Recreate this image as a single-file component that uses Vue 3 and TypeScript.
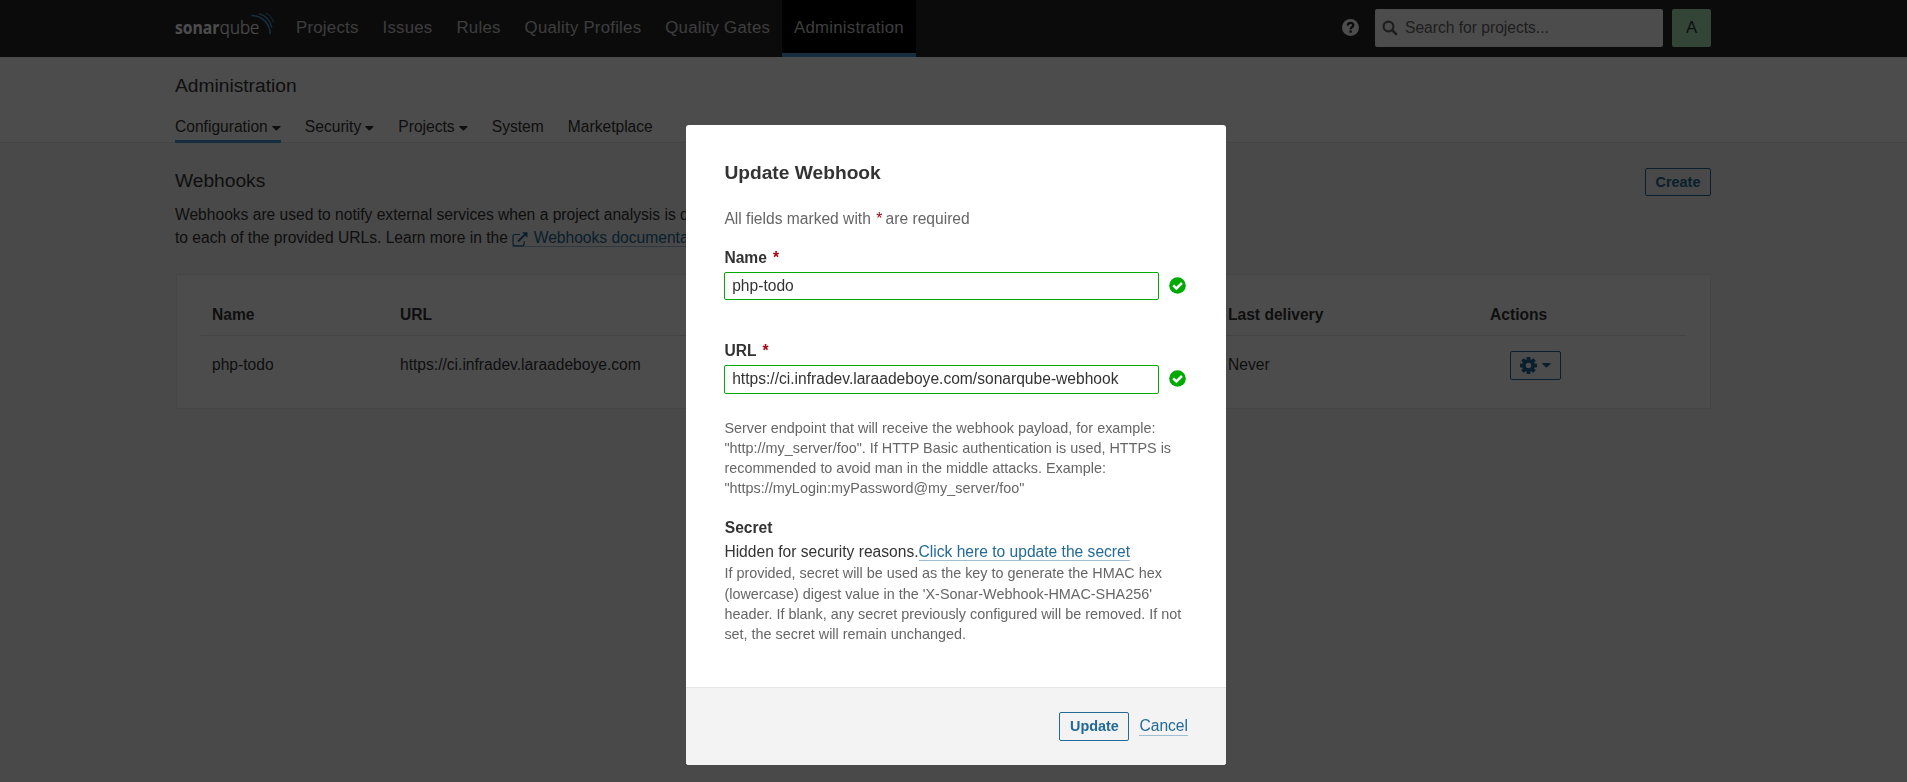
<script setup lang="ts">
interface Tab { label: string; caret?: boolean; active?: boolean }
interface NavLink { label: string; active?: boolean }

const navLinks: NavLink[] = [
  { label: 'Projects' },
  { label: 'Issues' },
  { label: 'Rules' },
  { label: 'Quality Profiles' },
  { label: 'Quality Gates' },
  { label: 'Administration', active: true },
]
const tabs: Tab[] = [
  { label: 'Configuration', caret: true, active: true },
  { label: 'Security', caret: true },
  { label: 'Projects', caret: true },
  { label: 'System' },
  { label: 'Marketplace' },
]
const webhook = { name: 'php-todo', url: 'https://ci.infradev.laraadeboye.com', lastDelivery: 'Never' }
const fields = [
  { label: 'Name', value: 'php-todo' },
  { label: 'URL', value: 'https://ci.infradev.laraadeboye.com/sonarqube-webhook' },
]
</script>

<template>
  <div class="app">
    <header class="navbar">
      <div class="container navbar-inner">
        <svg class="logo" width="100" height="32" viewBox="0 0 100 32">
          <text class="logo-bold" x="0" y="24.2" textLength="44.5" lengthAdjust="spacingAndGlyphs">sonar</text>
          <text class="logo-light" x="44.8" y="24.2" textLength="39.5" lengthAdjust="spacingAndGlyphs">qube</text>
          <g fill="none" stroke="#4b9fd5" stroke-linecap="butt">
            <path stroke-width="1.5" d="M76.500 5.600 C87 5.600 95 13.500 95.300 24" />
            <path stroke-width="1.200" d="M84 3.600 C90.500 5.500 95.500 11 97 17.500" />
            <path stroke-width="1" d="M91 3 C94.500 5 97 8 98.500 12" />
          </g>
        </svg>
        <nav class="nav">
          <a v-for="l in navLinks" :key="l.label" class="nav-link" :class="{ active: l.active }">{{ l.label }}</a>
        </nav>
        <div class="nav-right">
          <svg class="help" width="17" height="17" viewBox="0 0 17 17">
            <circle cx="8.500" cy="8.500" r="8.500" fill="#fff" />
            <path d="M5.700 6.500 C5.900 2.900 11.300 3 11.300 6.300 C11.300 8.300 8.600 8.200 8.600 10.300" fill="none" stroke="#262626" stroke-width="2.300" />
            <rect x="7.400" y="11.400" width="2.400" height="2.300" fill="#262626" />
          </svg>
          <div class="search">
            <svg width="16" height="16" viewBox="0 0 16 16" fill="none" stroke="#666">
              <circle cx="6.500" cy="6.500" r="4.900" stroke-width="2.200" />
              <path d="M10.200 10.200 L14 14" stroke-width="2.600" stroke-linecap="round" />
            </svg>
            <span>Search for projects...</span>
          </div>
          <div class="avatar">A</div>
        </div>
      </div>
    </header>

    <section class="context">
      <div class="container">
        <h1 class="context-title">Administration</h1>
        <ul class="tabs">
          <li v-for="t in tabs" :key="t.label" class="tab" :class="{ active: t.active }">
            <span>{{ t.label }}</span>
            <svg v-if="t.caret" class="caret" width="9" height="5" viewBox="0 0 9 5">
              <path d="M.7 0 H8.100 Q8.900 .3 8.400 .9 L5 4.200 Q4.400 4.700 3.800 4.200 L.4 .9 Q-.1 .3 .7 0Z" fill="#333" />
            </svg>
          </li>
        </ul>
      </div>
    </section>

    <main class="container page">
      <div class="page-head">
        <div>
          <h2 class="page-title">Webhooks</h2>
          <p class="page-desc">
            Webhooks are used to notify external services when a project analysis is done.<br>
            to each of the provided URLs. Learn more in the
            <a class="link doc-link"><svg class="ext" width="16" height="15" viewBox="0 0 16 15" fill="none" stroke="#236a97">
              <path d="M8 2.500 H3 Q1 2.500 1 4.500 V11.800 Q1 13.800 3 13.800 H10.200 Q12.200 13.800 12.200 11.800 V9" stroke-width="1.200" />
              <path d="M6 9.500 L13 2.500" stroke-width="2" />
              <path d="M10 .3 H15.500 V5.800 Z" fill="#236a97" stroke="none" />
            </svg>Webhooks documentation</a>.
          </p>
        </div>
        <button class="btn create">Create</button>
      </div>

      <div class="panel">
        <div class="row head">
          <span>Name</span><span>URL</span><span>Last delivery</span><span>Actions</span>
        </div>
        <div class="row body">
          <span>{{ webhook.name }}</span>
          <span>{{ webhook.url }}</span>
          <span>{{ webhook.lastDelivery }}</span>
          <div class="actions">
            <button class="btn gear">
              <svg width="17" height="17" viewBox="0 0 17 17">
                <g fill="#236a97">
                  <rect v-for="a in 4" :key="a" x="6.600" y="0" width="3.800" height="17" rx=".6" :transform="`rotate(${a * 45} 8.5 8.5)`" />
                </g>
                <circle cx="8.500" cy="8.500" r="4.500" fill="#fff" stroke="#236a97" stroke-width="3.600" />
              </svg>
              <svg width="9" height="5" viewBox="0 0 9 5">
                <path d="M.7 0 H8.100 Q8.900 .3 8.400 .9 L5 4.200 Q4.400 4.700 3.800 4.200 L.4 .9 Q-.1 .3 .7 0Z" fill="#236a97" />
              </svg>
            </button>
          </div>
        </div>
      </div>
    </main>

    <div class="overlay">
      <form class="modal" @submit.prevent>
        <div class="modal-body">
          <h2 class="modal-title">Update Webhook</h2>
          <p class="required-note">All fields marked with <em class="star">*</em> are required</p>
          <div v-for="f in fields" :key="f.label" class="field">
            <label class="label">{{ f.label }}<em class="star">*</em></label>
            <div class="control">
              <div class="input">{{ f.value }}</div>
              <svg class="check" width="17" height="17" viewBox="0 0 17 17">
                <circle cx="8.500" cy="8.500" r="8.300" fill="#0a0" />
                <path d="M4.200 8.400 L7.400 11.500 L12.900 6" fill="none" stroke="#fff" stroke-width="2.500" />
              </svg>
            </div>
          </div>
          <p class="hint url-hint">
            Server endpoint that will receive the webhook payload, for example:<br>
            "http://my_server/foo". If HTTP Basic authentication is used, HTTPS is<br>
            recommended to avoid man in the middle attacks. Example:<br>
            "https://myLogin:myPassword@my_server/foo"
          </p>
          <label class="label secret-label">Secret</label>
          <p class="secret">Hidden for security reasons.<a class="link">Click here to update the secret</a></p>
          <p class="hint secret-hint">
            If provided, secret will be used as the key to generate the HMAC hex<br>
            (lowercase) digest value in the 'X-Sonar-Webhook-HMAC-SHA256'<br>
            header. If blank, any secret previously configured will be removed. If not<br>
            set, the secret will remain unchanged.
          </p>
        </div>
        <footer class="modal-foot">
          <button class="btn update">Update</button>
          <a class="link">Cancel</a>
        </footer>
      </form>
    </div>
  </div>
</template>

<style>
html, body { margin: 0; height: 100%; overflow: hidden; background: #f3f3f3; }
</style>

<style scoped>
.app { height: 782px; background: #f3f3f3; color: #333; font: 15.6px/23.4px "Liberation Sans", Arial, sans-serif; }
.app * { box-sizing: border-box; }
h1, h2, p, ul { margin: 0; padding: 0; }
.container { width: 1536px; margin-left: 175px; }

.navbar { height: 57px; background: #262626; }
.navbar-inner { display: flex; height: 57px; }
.logo { margin-top: 10px; flex: none; }
.logo-bold { font: 700 18px "Open Sans", sans-serif; fill: #fff; }
.logo-light { font: 300 18px "Open Sans", sans-serif; fill: #fff; stroke: #fff; stroke-width: .2px; }
.nav { display: flex; margin-left: 9px; }
.nav-link { height: 57px; padding: 0 12px; border-bottom: 4px solid transparent; font-size: 16.8px; line-height: 56px; letter-spacing: .24px; color: #ccc; white-space: nowrap; }
.nav-link.active { background: #000; border-bottom-color: #4b9fd5; }
.nav-right { display: flex; margin-left: auto; padding-top: 9px; }
.help { margin: 10px 16px 0 0; }
.search { display: flex; align-items: center; width: 288px; height: 38px; margin-right: 9px; padding-left: 7px; border-radius: 2px; background: #fff; color: #666; }
.search span { margin: 0 0 0 7px; }
.avatar { width: 39px; height: 38px; border-radius: 2px; background: #a8e8b9; text-align: center; font-size: 16.8px; line-height: 37px; }

.context { height: 86px; padding-top: 17px; background: #fff; border-bottom: 1px solid #e6e6e6; }
.context-title, .page-title { font-size: 19.2px; line-height: 24px; font-weight: 400; }
.tabs { display: flex; gap: 24.100px; margin-top: 17px; list-style: none; }
.tab { display: flex; height: 28px; border-bottom: 3px solid transparent; }
.tab.active { border-color: #4b9fd5; }
.caret { margin: 11px 0 0 4px; }

.page { padding-top: 25px; }
.page-head { display: flex; justify-content: space-between; align-items: flex-start; }
.page-title { margin-top: 1px; }
.page-desc { margin-top: 10px; white-space: nowrap; }
.link { color: #236a97; border-bottom: 1px solid #9ebfd3; }
.ext { margin-right: 5.500px; vertical-align: -4px; }
.btn { display: flex; align-items: center; justify-content: center; padding: 0; border: 1px solid #236a97; border-radius: 2px; background: transparent; color: #236a97; font: 700 14.4px/20px "Liberation Sans", Arial, sans-serif; }
.create { width: 66px; height: 28px; }

.panel { height: 135.400px; margin: 24px 0 0 .500px; padding: 28px 24px 0; border: 1px solid #e6e6e6; background: #fff; }
.row { display: grid; grid-template-columns: 188px 828px 262px 1fr; padding-left: 11.500px; }
.head { height: 33px; border-bottom: 1px solid #e6e6e6; font-weight: 700; }
.body { height: 59px; align-items: center; }
.body > span { margin-top: -1px; }
.actions { padding-left: 20px; }
.gear { width: 51px; height: 29px; gap: 5px; }

.overlay { position: fixed; inset: 0; background: rgba(0, 0, 0, .7); }
.modal { width: 540px; height: 640px; margin: 125px 0 0 686px; display: flex; flex-direction: column; border-radius: 3px; background: #fff; overflow: hidden; }
.modal-body { flex: 1; padding: 36px 37px 0 38.400px; }
.modal-title { font-size: 19.200px; line-height: 24px; }
.required-note { margin-top: 22px; color: #666; }
.star { color: #a4030f; font-style: normal; }
.required-note .star { margin: 0 -1px 0 1px; }
.field { height: 93.400px; }
.required-note + .field { margin-top: 15.600px; }
.label { display: block; font-weight: 700; }
.label .star { margin-left: 6px; }
.control { display: flex; align-items: center; margin: 2.200px 0 0 -.400px; gap: 10px; }
.input { width: 435px; height: 28.700px; padding-left: 7.200px; border: 1px solid #0a0; border-radius: 2px; line-height: 26.400px; }
.check { margin-top: -1px; }
.hint { color: #666; font-size: 14.400px; line-height: 20px; white-space: nowrap; }
.url-hint { margin-top: -14.600px; }
.secret-label { margin: 18px 0 0 .400px; }
.secret-hint { margin-top: .200px; line-height: 20.400px; }
.modal-foot { height: 78px; display: flex; align-items: center; justify-content: flex-end; padding-right: 38px; border-top: 1px solid #e6e6e6; background: #f3f3f3; }
.update { width: 70px; height: 29px; margin-right: 10px; padding-bottom: 1px; }
.modal-foot .link { line-height: 18px; }
</style>
